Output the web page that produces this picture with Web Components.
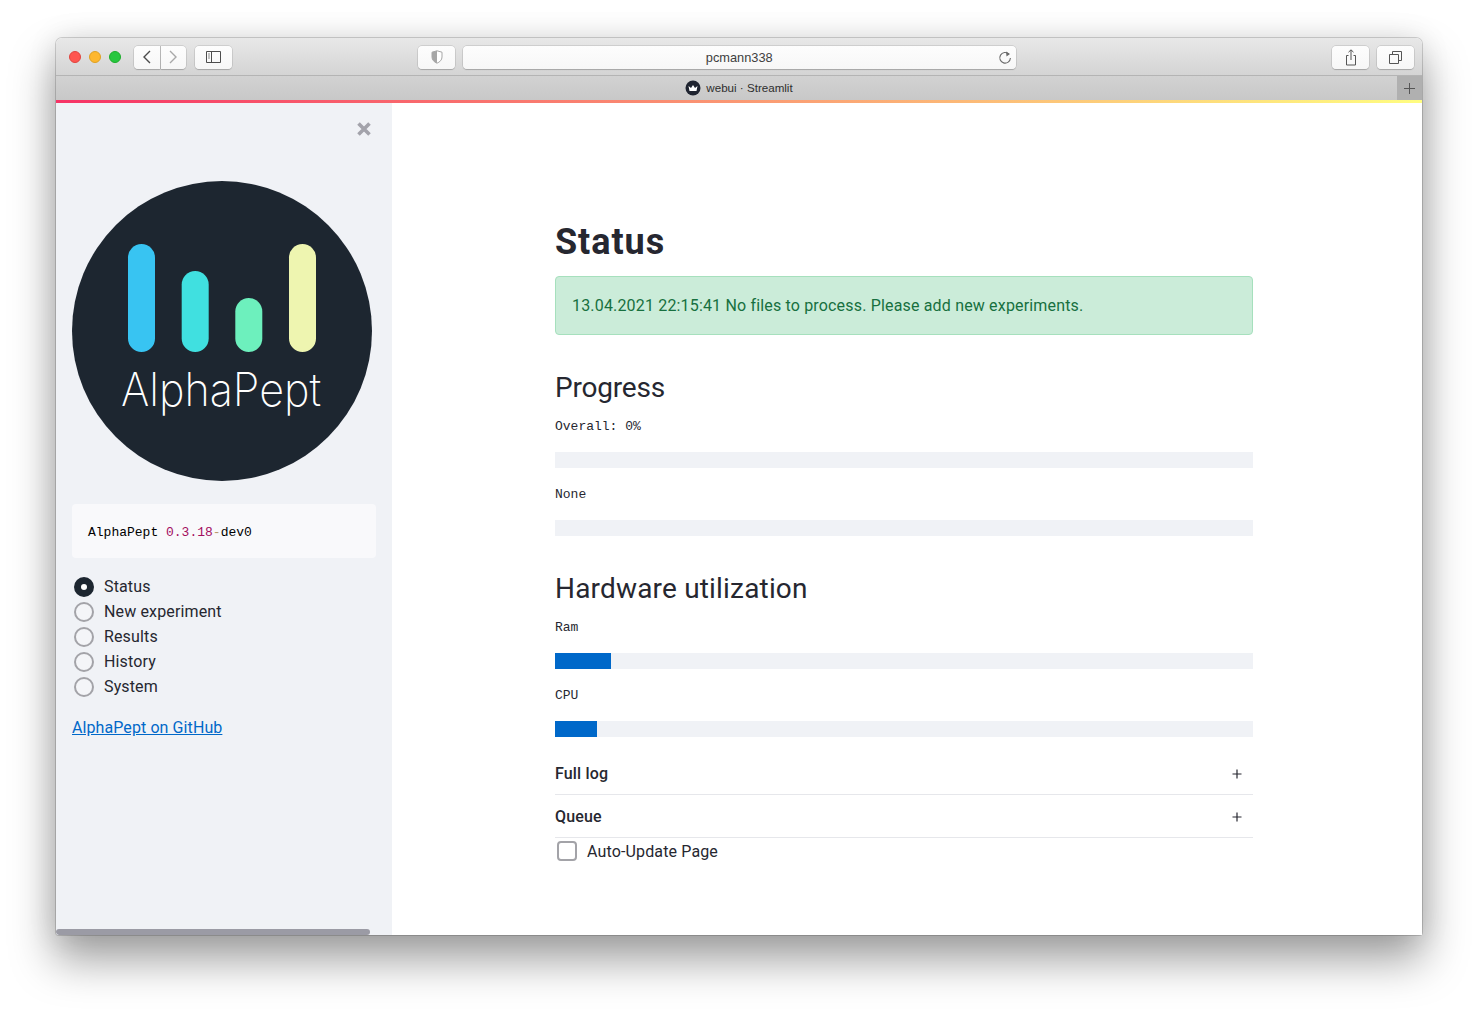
<!DOCTYPE html>
<html lang="en"><head><meta charset="utf-8"><title>webui · Streamlit</title>
<style>
html,body{margin:0;background:#fff}
body{padding:38px 56px 0;height:1009px;box-sizing:border-box;overflow:hidden;font-family:Roboto,"Liberation Sans",sans-serif}
</style></head><body>
<safari-window>
  <browser-toolbar slot="chrome" address="pcmann338"></browser-toolbar>
  <browser-tabbar slot="chrome" title-text="webui · Streamlit"></browser-tabbar>
  <app-sidebar slot="side">
    <alpha-logo></alpha-logo>
    <version-box></version-box>
    <nav-radio></nav-radio>
    <a href="#" class="gh" style="display:block;margin-top:17px;color:#0068c9;font-size:16px;line-height:24px;width:max-content;letter-spacing:.09px">AlphaPept on GitHub</a>
  </app-sidebar>
  <app-main slot="main">
    <st-title>Status</st-title>
    <st-alert>13.04.2021 22:15:41 No files to process. Please add new experiments.</st-alert>
    <st-heading style="letter-spacing:-.2px">Progress</st-heading>
    <st-bar label="Overall: 0%" value="0"></st-bar>
    <st-bar label="None" value="0" gap="15"></st-bar>
    <st-heading>Hardware utilization</st-heading>
    <st-bar label="Ram" value="56"></st-bar>
    <st-bar label="CPU" value="42" gap="15"></st-bar>
    <st-expander style="margin-top:15px">Full log</st-expander>
    <st-expander>Queue</st-expander>
    <st-check>Auto-Update Page</st-check>
  </app-main>
</safari-window>
<script>
const def=(name,html,setup)=>customElements.define(name,class extends HTMLElement{
  connectedCallback(){ if(this.shadowRoot) return; const r=this.attachShadow({mode:'open'}); r.innerHTML=typeof html==='function'?html(this):html; setup&&setup(this,r);}
});
def('safari-window',`<style>
:host{display:flex;flex-direction:column;width:1366px;height:897px;border-radius:6px 6px 3px 3px;background:#fff;position:relative;
 box-shadow:0 0 0 1px rgba(0,0,0,.16),0 24px 44px 2px rgba(0,0,0,.36),0 0 30px rgba(0,0,0,.1)}
.body{flex:1;display:flex;min-height:0}
.deco{height:3px;background:linear-gradient(90deg,#f63366,#fffd80);flex:none}
.chrome{flex:none;border-radius:6px 6px 0 0;overflow:hidden}
</style><div class="chrome"><slot name="chrome"></slot></div><div class="deco"></div><div class="body"><slot name="side"></slot><slot name="main"></slot></div>`);
const btn=`display:flex;align-items:center;justify-content:center;height:23px;box-sizing:border-box;background:linear-gradient(#fdfdfd,#f7f7f7);border-radius:4px;box-shadow:0 0 0 .5px rgba(0,0,0,.16),0 .5px 1px rgba(0,0,0,.16);flex:none;position:relative;top:.5px`;
def('browser-toolbar',h=>`<style>
:host{display:flex;align-items:center;height:38px;box-sizing:border-box;padding:0 8px 0 13px;background:linear-gradient(#e8e8e8,#d4d4d4);border-bottom:1px solid #b4b4b4}
.l{width:12px;height:12px;border-radius:50%;box-sizing:border-box;margin-right:8px;flex:none}
.b{${btn}}
.url{flex:1;font:12.8px "Liberation Sans",sans-serif;color:#404040;margin:0 316px 0 8px;padding-top:1px}
.url svg{position:absolute;right:4px;top:4px}
svg{display:block}
</style>
<i class="l" style="background:#fe5650;border:.5px solid #e0443e"></i><i class="l" style="background:#fdb72e;border:.5px solid #dea123"></i><i class="l" style="background:#27c73f;border:.5px solid #1dad2b"></i>
<div class="b" style="width:26px;margin-left:5px;border-radius:4px 0 0 4px"><svg width="10" height="14" viewBox="0 0 10 14"><path d="M8 1 2 7l6 6" fill="none" stroke="#4a4a4a" stroke-width="1.4"/></svg></div>
<div class="b" style="width:25px;border-radius:0 4px 4px 0;margin-left:.5px"><svg width="10" height="14" viewBox="0 0 10 14"><path d="m2 1 6 6-6 6" fill="none" stroke="#a8a8a8" stroke-width="1.4"/></svg></div>
<div class="b" style="width:37px;margin-left:9px"><svg width="15" height="12" viewBox="0 0 15 12"><path d="M.5.5h14v11H.5zM5.5.5v11" fill="none" stroke="#4d4d4d"/><path d="M2 3h2M2 5h2M2 7h2" stroke="#8a8a8a"/></svg></div>
<div class="b" style="width:37px;margin-left:186px"><svg width="12" height="14" viewBox="0 0 12 14" style="margin-left:1px"><path d="M6 .8 11 2.2V7c0 3-2.2 5-5 6.2C3.200 12 1 10 1 7V2.200z" fill="#fff" stroke="#a6a6a6"/><path d="M6 .8V13.200C3.200 12 1 10 1 7V2.200z" fill="#a6a6a6"/></svg></div>
<div class="b url">${h.getAttribute('address')}<svg width="14" height="15" viewBox="0 0 14 15"><path d="M10.800 4A5.300 5.300 0 1 0 12.400 8" fill="none" stroke="#6a6a6a" stroke-width="1.100"/><path d="M8 1.500 12 4 8.500 6.500z" fill="#6a6a6a"/></svg></div>
<div class="b" style="width:37px"><svg width="14" height="17" viewBox="0 0 14 17"><path d="M4.500 6.500H2.500V16h9V6.500H9.500M7 11V1M4.500 3.200 7 .8l2.500 2.400" fill="none" stroke="#555"/></svg></div>
<div class="b" style="width:37px;margin-left:8px"><svg width="13" height="13" viewBox="0 0 13 13"><path d="M.5 3.500h9v9h-9z" fill="none" stroke="#555"/><path d="M3.500 3.500V.5h9v9h-3" fill="none" stroke="#555"/></svg></div>`);
def('browser-tabbar',h=>`<style>
:host{display:flex;align-items:center;justify-content:center;height:24px;background:linear-gradient(#d2d2d2,#c8c8c8);position:relative;font:11.6px "Liberation Sans",sans-serif;color:#2e2e2e}
.t{display:flex;align-items:center;gap:5px;margin-left:-1px}
.t span{position:relative;top:-1px;left:.5px}
.plus{position:absolute;right:0;top:0;bottom:0;width:25px;background:#b0b0b0;display:flex;align-items:center;justify-content:center}
svg{display:block}
</style><div class="t"><svg width="16" height="16" viewBox="0 0 16 16"><circle cx="8" cy="8" r="7.500" fill="#1f2430"/><path d="M3.500 6 6 8 8 5l2 3 2.500-2-1 5h-7z" fill="#fff"/></svg><span>${h.getAttribute('title-text')}</span></div>
<div class="plus"><svg width="11" height="11" viewBox="0 0 11 11"><path d="M5.500 0v11M0 5.500h11" stroke="#555" stroke-width="1"/></svg></div>`);
def('app-sidebar',`<style>
:host{display:block;flex:none;width:336px;height:100%;box-sizing:border-box;background:#f0f2f6;padding:78px 16px 0;position:relative;border-radius:0 0 0 3px;overflow:hidden}
.x{position:absolute;left:300px;top:19px;display:block}
.sb{position:absolute;left:0;bottom:0;width:314px;height:6px;border-radius:3px;background:#9b9ba5}
</style><svg class="x" width="16" height="14" viewBox="0 0 16 14"><path d="M2.500 1.500 13.500 12.500M13.500 1.500 2.500 12.500" stroke="#a3a3ab" stroke-width="3.600"/></svg><slot></slot><div class="sb"></div>`);
def('alpha-logo',`<style>:host{display:block;width:300px;height:300px}svg{display:block}</style>
<svg width="300" height="300" viewBox="0 0 300 300"><circle cx="150" cy="150" r="150" fill="#1d2630"/>
<rect x="56" y="63" width="27" height="108" rx="13.500" fill="#38c4f2"/>
<rect x="109.700" y="90" width="27" height="81" rx="13.500" fill="#40e0e0"/>
<rect x="163.300" y="117" width="27" height="54" rx="13.500" fill="#6df0bd"/>
<rect x="217" y="63" width="27" height="108" rx="13.500" fill="#eef5b0"/>
<text x="49" y="224.500" font-family="Inter" font-weight="200" font-size="46" fill="#fff" textLength="200" lengthAdjust="spacingAndGlyphs">AlphaPept</text></svg>`);
def('version-box',`<style>:host{display:block;margin-top:23px;height:54px;box-sizing:border-box;width:304px;background:#f9f9fb;border-radius:4px;padding:0 16px;font:13px/58px "Liberation Mono",monospace;color:#000}
.n{color:#a30e5f}.o{color:#b89a6a}</style>AlphaPept <span class="n">0.3.18</span><span class="o">-</span>dev0`);
def('nav-radio',()=>`<style>:host{display:block;margin-top:16px;padding-left:2px}
.r{display:flex;align-items:center;height:25px;color:#262730;font-size:16px;gap:10px;letter-spacing:.14px}
i{width:20px;height:20px;box-sizing:border-box;border-radius:50%;border:2px solid #a3a3a8;background:#f4f5f8;flex:none;display:flex;align-items:center;justify-content:center}
.on i{background:#1d2630;border-color:#1d2630}.on i::after{content:"";width:6px;height:6px;border-radius:50%;background:#fff}
</style>${['Status','New experiment','Results','History','System'].map((t,i)=>`<div class="r ${i?'':'on'}"><i></i><span>${t}</span></div>`).join('')}`);
def('app-main',`<style>:host{display:block;flex:1;min-width:0;padding:113px 169px 0 163px;box-sizing:border-box;background:#fff;color:#262730}</style><slot></slot>`);
def('st-title',`<style>:host{display:block;font-size:36px;font-weight:700;line-height:52px;height:50px;margin-bottom:10px;color:#262730;letter-spacing:.95px}</style><slot></slot>`);
def('st-alert',`<style>:host{display:block;height:59px;box-sizing:border-box;border:1px solid #a6e0bd;border-radius:4px;background:#cbecd9;color:#17703f;font-size:16px;line-height:57px;padding:0 16px;letter-spacing:.17px}</style><slot></slot>`);
def('st-heading',`<style>:host{display:block;margin-top:32px;font-size:28px;line-height:42px;height:40px;color:#262730;letter-spacing:.18px}</style><slot></slot>`);
def('st-bar',h=>`<style>:host{display:block;margin-top:${h.getAttribute('gap')||8}px}
.l{font:13px/24px "Liberation Mono",monospace;color:#262730;height:20px;margin-bottom:17px}
.t{height:16px;background:#f0f2f6}.f{height:100%;background:#0068c9;width:${h.getAttribute('value')}px}</style>
<div class="l">${h.getAttribute('label')}</div><div class="t"><div class="f"></div></div>`);
def('st-expander',`<style>:host{display:flex;align-items:center;justify-content:space-between;height:43px;box-sizing:border-box;border-bottom:1px solid #e6e7eb;font-size:16px;font-weight:500;color:#262730;letter-spacing:.16px}
svg{display:block;margin:1px 11px 0 0}</style><slot></slot><svg width="10" height="10" viewBox="0 0 10 10"><path d="M5 .5v9M.5 5h9" stroke="#262730" stroke-width="1.200"/></svg>`);
def('st-check',`<style>:host{display:flex;align-items:center;height:26px;gap:10px;padding-left:2px;font-size:16px;color:#262730;letter-spacing:.14px}
i{width:20px;height:20px;box-sizing:border-box;border:2px solid #a3a3a8;border-radius:4px;flex:none}</style><i></i><slot></slot>`);
</script>
</body></html>
